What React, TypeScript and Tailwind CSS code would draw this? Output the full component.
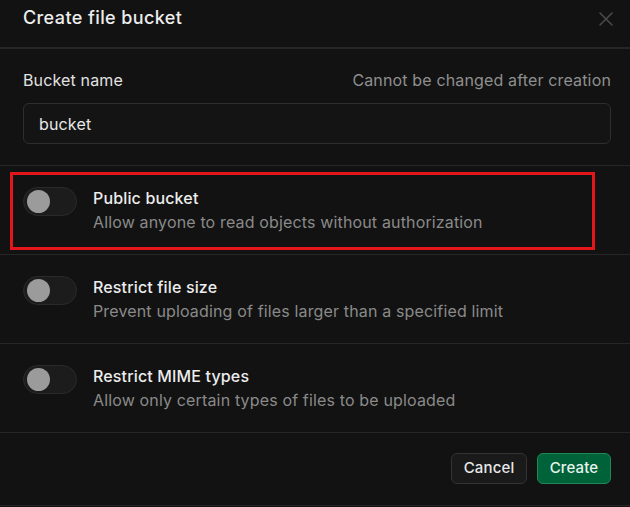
import { X } from "lucide-react";

const options = [
  {
    title: "Public bucket",
    description: "Allow anyone to read objects without authorization",
  },
  {
    title: "Restrict file size",
    description: "Prevent uploading of files larger than a specified limit",
  },
  {
    title: "Restrict MIME types",
    description: "Allow only certain types of files to be uploaded",
  },
];

function Toggle() {
  return (
    <div className="mt-[1px] flex h-[29px] w-[54px] shrink-0 items-center rounded-full border border-[#2a2a2a] bg-[#1c1c1c] pl-[3px]">
      <div className="h-[23px] w-[23px] rounded-full bg-[#9b9b9b]" />
    </div>
  );
}

export default function App() {
  return (
    <div
      className="relative flex h-[507px] w-[630px] flex-col overflow-hidden bg-[#121212] text-[16px] tracking-[0.15px]"
      style={{ fontFamily: "Inter, 'Noto Sans', sans-serif" }}
    >
      <div className="flex h-[49px] shrink-0 items-start justify-between border-b-2 border-[#262626] pl-[23px] pr-[12px] pt-[6px]">
        <h1 className="text-[18px] leading-[24px] font-medium tracking-[0.4px] text-[#ededed]">Create file bucket</h1>
        <X className="mt-[1px] h-[24px] w-[24px] text-[#4a4a4a]" strokeWidth={1.6} />
      </div>

      <div className="border-b border-[#262626] pl-[23px] pr-[19px] pt-[19px] pb-[21px]">
        <div className="flex items-center justify-between leading-[24px]">
          <span className="text-[#e2e2e2]">Bucket name</span>
          <span className="text-[#8f8f8f]">Cannot be changed after creation</span>
        </div>
        <div className="mt-[11px] flex h-[41px] items-center rounded-[6px] border border-[#2e2e2e] bg-[#141414] px-[15px] text-[#e8e8e8]">
          bucket
        </div>
      </div>

      {options.map((opt) => (
        <div
          key={opt.title}
          className="flex h-[89px] items-start gap-[16px] border-b border-[#262626] pl-[23px] pr-[19px] pt-[20px]"
        >
          <Toggle />
          <div className="flex flex-col leading-[24px]">
            <span className="font-medium text-[#ededed]">{opt.title}</span>
            <span className="text-[#8a8a8a]">{opt.description}</span>
          </div>
        </div>
      ))}

      <div className="flex flex-1 items-start justify-end gap-[10px] border-b border-[#262626] px-[19px] pt-[20px]">
        <button className="h-[31px] w-[76px] rounded-[6px] border border-[#333333] bg-[#1a1a1a] text-[15px] font-medium text-[#e8e8e8]">
          Cancel
        </button>
        <button className="h-[31px] w-[74px] rounded-[6px] border border-[#1f8a58] bg-[#006239] text-[15px] font-medium text-[#e8f5ee]">
          Create
        </button>
      </div>
      <div className="h-[1px] shrink-0" />

      <div className="pointer-events-none absolute left-[10px] top-[172px] h-[78px] w-[585px] border-[3px] border-[#e3161c]" />
    </div>
  );
}
